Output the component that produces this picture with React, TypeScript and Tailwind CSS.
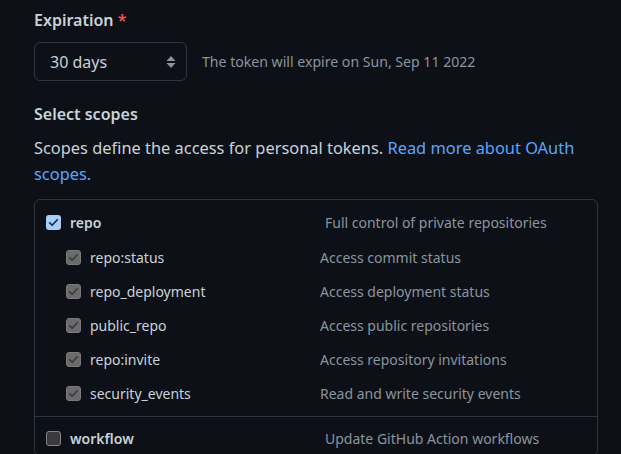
const subScopes = [
  { name: "repo:status", desc: "Access commit status" },
  { name: "repo_deployment", desc: "Access deployment status" },
  { name: "public_repo", desc: "Access public repositories" },
  { name: "repo:invite", desc: "Access repository invitations" },
  { name: "security_events", desc: "Read and write security events" },
];

const Check = ({ color }: { color: string }) => (
  <svg width="11" height="11" viewBox="0 0 16 16" fill="none">
    <path d="M2.5 8.5l3.5 3.5 7.5-8" stroke={color} strokeWidth="2.4" strokeLinecap="round" strokeLinejoin="round" />
  </svg>
);

const App = () => {
  return (
    <div className="w-[621px] h-[454px] overflow-hidden bg-[#0d1117] text-[#c9d1d9] pl-[34px] pt-[8px] font-['Noto_Sans',sans-serif]">
      <div className="text-[16px] leading-[24px] font-semibold">
        Expiration <span className="text-[#f85149]">*</span>
      </div>

      <div className="flex items-center mt-[10px]">
        <div className="w-[153px] h-[39px] border border-[#30363d] rounded-[6px] flex items-center justify-between pl-[15px] pr-[9px] text-[16px]">
          <span>30 days</span>
          <svg width="12" height="14" viewBox="0 0 12 14">
            <path d="M6 1L10.5 6H1.5Z" fill="#8b949e" />
            <path d="M6 13L10.5 8H1.5Z" fill="#8b949e" />
          </svg>
        </div>
        <span className="ml-[15px] text-[14.1px] text-[#8b949e]">The token will expire on Sun, Sep 11 2022</span>
      </div>

      <div className="mt-[21px] text-[16px] leading-[24px] font-semibold">Select scopes</div>
      <p className="mt-[9px] text-[16.4px] leading-[26px] w-[560px]">
        Scopes define the access for personal tokens. <span className="text-[#58a6ff]">Read more about OAuth scopes.</span>
      </p>

      <div className="mt-[12px] w-[564px] border border-[#30363d] rounded-[6px] text-[14px]">
        <div className="pt-[5px] pb-[6px]">
          <div className="h-[34px] flex items-center pl-[11px]">
            <div className="w-[15px] h-[15px] rounded-[3px] bg-[#a5cdfd] flex items-center justify-center">
              <Check color="#1f2937" />
            </div>
            <span className="ml-[9px] w-[255px] font-semibold">repo</span>
            <span className="text-[#8b949e]">Full control of private repositories</span>
          </div>
          <div className="mt-[1px]">
            {subScopes.map((s) => (
              <div key={s.name} className="h-[34px] flex items-center pl-[31px]">
                <div className="w-[15px] h-[15px] rounded-[3px] bg-[#6b6b6b] border border-[#7a7a7a] flex items-center justify-center">
                  <Check color="#3a3a3a" />
                </div>
                <span className="ml-[9px] w-[230px]">{s.name}</span>
                <span className="text-[#8b949e]">{s.desc}</span>
              </div>
            ))}
          </div>
        </div>
        <div className="border-t border-[#30363d] pt-[4px]">
          <div className="h-[34px] flex items-center pl-[11px]">
            <div className="w-[15px] h-[15px] rounded-[3px] bg-[#3b3b3b] border border-[#858585]" />
            <span className="ml-[9px] w-[255px] font-semibold">workflow</span>
            <span className="text-[#8b949e]">Update GitHub Action workflows</span>
          </div>
        </div>
      </div>
    </div>
  );
};

export default App;
